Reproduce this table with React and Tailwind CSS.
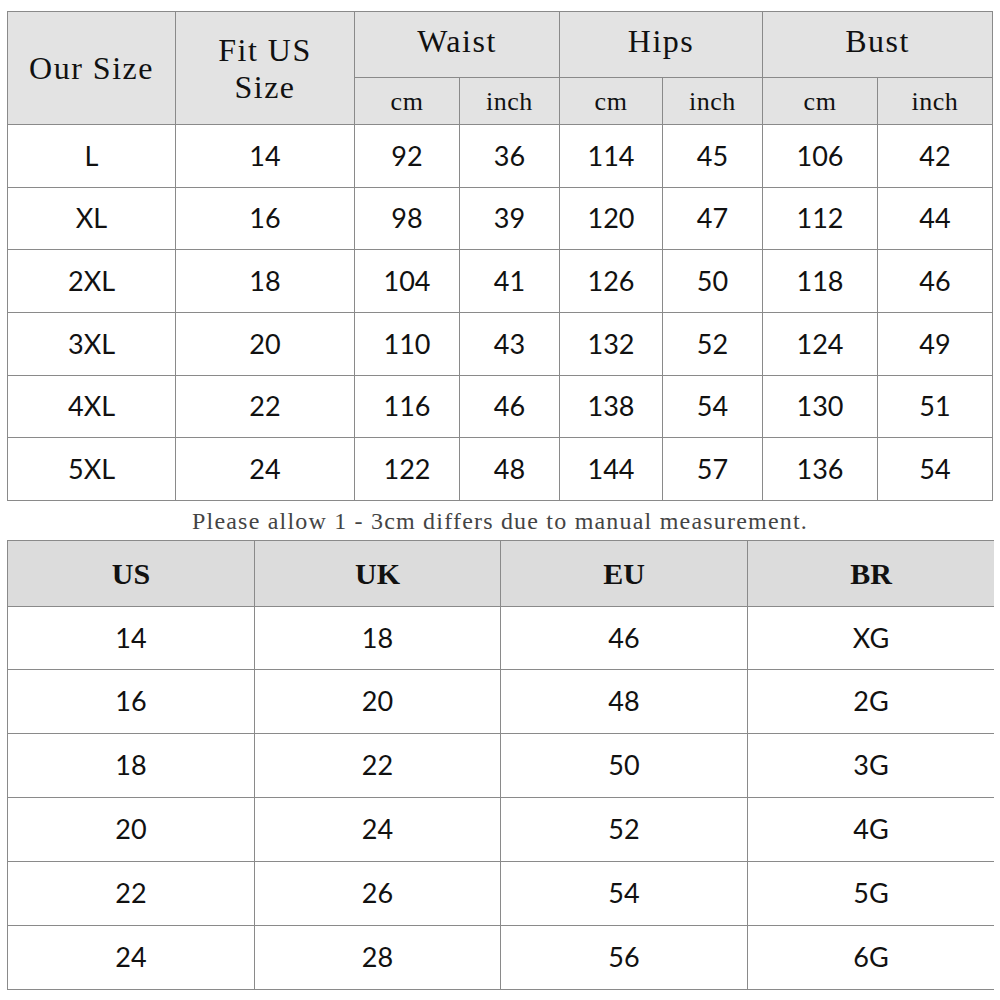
import React from 'react';

const sizeRows = [
  ['L', '14', '92', '36', '114', '45', '106', '42'],
  ['XL', '16', '98', '39', '120', '47', '112', '44'],
  ['2XL', '18', '104', '41', '126', '50', '118', '46'],
  ['3XL', '20', '110', '43', '132', '52', '124', '49'],
  ['4XL', '22', '116', '46', '138', '54', '130', '51'],
  ['5XL', '24', '122', '48', '144', '57', '136', '54'],
];
const rowHeights = ['h-[62px]', 'h-[61px]', 'h-[62px]', 'h-[62px]', 'h-[61px]', 'h-[62px]'];

const convRows = [
  ['14', '18', '46', 'XG'],
  ['16', '20', '48', '2G'],
  ['18', '22', '50', '3G'],
  ['20', '24', '52', '4G'],
  ['22', '26', '54', '5G'],
  ['24', '28', '56', '6G'],
];

// shared cell styles
const cell = 'flex items-center justify-center text-[#111]';
const serif = "font-['Liberation_Serif','Times_New_Roman',serif]";
const sans = "font-['Lato','Liberation_Sans',sans-serif]";
const head = `${cell} ${serif} bg-[#e3e3e3] text-[32px] tracking-[1.5px]`;

export default function App() {
  return (
    <div className="w-[1000px] h-[1000px] bg-white pt-[11px] pl-[7px]">
      {/* Size table */}
      <div className="grid w-[986px] gap-px p-px bg-[#8a8a8a] grid-cols-[167px_178px_104px_99px_102px_99px_114px_114px]">
        <div className={`${head} row-span-2`}>Our Size</div>
        <div className={`${head} row-span-2 leading-[37px] text-center pt-[2px]`}>
          Fit US<br />Size
        </div>
        <div className={`${head} col-span-2 h-[65px] pb-[8px]`}>Waist</div>
        <div className={`${head} col-span-2 pb-[8px]`}>Hips</div>
        <div className={`${head} col-span-2 pb-[8px]`}>Bust</div>
        {['cm', 'inch', 'cm', 'inch', 'cm', 'inch'].map((u, i) => (
          <div key={i} className={`${cell} ${serif} h-[46px] bg-[#e3e3e3] text-[26px] tracking-[0.5px]`}>{u}</div>
        ))}
        {sizeRows.map((r, ri) =>
          r.map((v, ci) => (
            <div key={`${ri}-${ci}`} className={`${cell} ${sans} ${rowHeights[ri]} bg-white text-[27px]`}>
              {v}
            </div>
          ))
        )}
      </div>

      <p className={`${serif} w-[986px] h-[39px] flex items-center justify-center text-[24px] tracking-[1.2px] text-[#444]`}>
        Please allow 1 - 3cm differs due to manual measurement.
      </p>

      {/* Conversion table */}
      <div className="grid w-[987px] gap-px p-px bg-[#8a8a8a] grid-cols-[246px_245px_246px_246px]">
        {['US', 'UK', 'EU', 'BR'].map((h) => (
          <div key={h} className={`${cell} ${serif} h-[65px] bg-[#dcdcdc] text-[30px] font-bold`}>{h}</div>
        ))}
        {convRows.map((r, ri) =>
          r.map((v, ci) => (
            <div key={`${ri}-${ci}`} className={`${cell} ${sans} ${ri === 0 ? 'h-[62px]' : 'h-[63px]'} bg-white text-[27px]`}>
              {v}
            </div>
          ))
        )}
      </div>
    </div>
  );
}
